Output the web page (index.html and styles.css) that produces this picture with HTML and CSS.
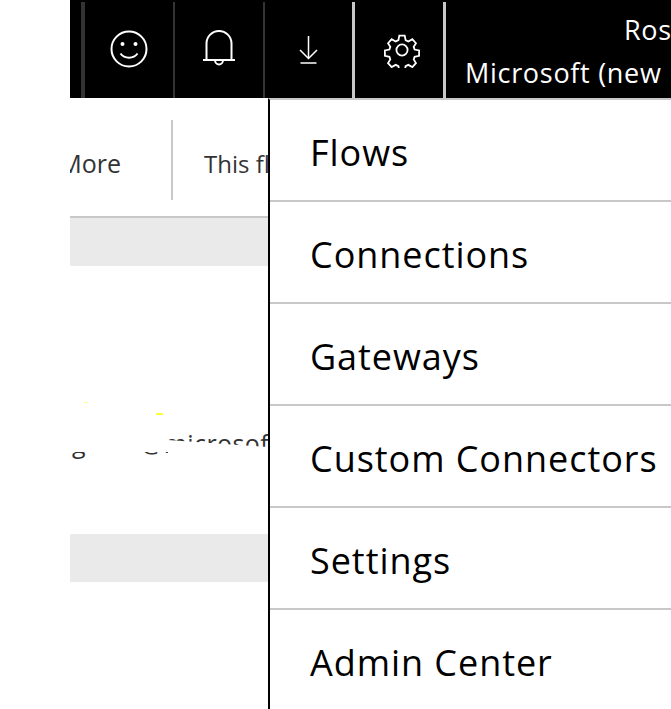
FILE: index.html
```html
<!DOCTYPE html>
<html lang="en">
<head>
  <meta charset="UTF-8" />
  <title>Flows</title>
  <link rel="stylesheet" href="styles.css">
</head>
<body>

  <div class="topbar">
    <div class="cell cell-first"></div>
    <div class="cell cell-dim">
      <svg class="icon icon-up" width="40" height="40" viewBox="0 0 40 40"><circle cx="20" cy="20" r="17.500"/><circle cx="13.500" cy="15" r="2" class="dot"/><circle cx="26.500" cy="15" r="2" class="dot"/><path d="M11.500 24.500c4 5.500 13 5.500 17 0"/></svg>
    </div>
    <div class="cell cell-dim">
      <svg class="icon icon-up" width="40" height="40" viewBox="0 0 40 40"><path d="M7.500 31V14.500a12.500 12.500 0 0 1 25 0V31"/><path d="M4 31h32"/><path d="M16 31a4 4.500 0 0 0 8 0"/></svg>
    </div>
    <div class="cell cell-light">
      <svg class="icon icon-thin" width="40" height="40" viewBox="0 0 40 40"><path d="M19.500 6v22"/><path d="M11 20l8.500 8.500 8.500-8.500"/><path d="M11.500 33h16"/></svg>
    </div>
    <div class="cell cell-light cell-gear">
      <svg class="icon" width="36" height="36" viewBox="0 0 40 40"><circle cx="20" cy="20" r="6.200"/><path d="M17 4h6l1 5 3 1.500 4.500-2.500 4 4.500-2.500 4 1 3 5 1v6l-5 1-1 3 2.500 4-4 4.500-4.500-2.500-3 1.500-1 5h-6l-1-5-3-1.500-4.500 2.500-4-4.500 2.500-4-1-3-5-1v-6l5-1 1-3-2.500-4 4-4.500 4.500 2.500 3-1.500z"/></svg>
    </div>
    <div class="account">
      <div class="account-name">Rosalind Smith</div>
      <div class="account-org">Microsoft (new</div>
    </div>
  </div>

  <div class="main">
    <div class="page">
      <div class="toolbar">
        <div class="tool-more"><span>More</span></div>
        <div class="tool-note">This flow has no runs</div>
      </div>
      <div class="band band-head"></div>
      <div class="owner">
        <span class="speck speck-a"></span>
        <span class="speck speck-b"></span>
        <div class="owner-mail">g<span class="gap"></span>@microsoft.com</div>
        <span class="wipe wipe-left"></span>
        <span class="wipe wipe-right"></span>
      </div>
      <div class="band"></div>
    </div>

    <div class="menu">
      <div class="menu-item">Flows</div>
      <div class="menu-item">Connections</div>
      <div class="menu-item">Gateways</div>
      <div class="menu-item">Custom Connectors</div>
      <div class="menu-item">Settings</div>
      <div class="menu-item">Admin Center</div>
    </div>
  </div>

</body>
</html>
```

FILE: styles.css
```css
html, body {
  height: 100%;
}
body {
  margin: 0;
  background: #fff;
  font-family: "Open Sans", Arial, sans-serif;
  overflow: hidden;
}
.topbar {
  display: flex;
  height: 98px;
  margin-left: 70px;
  background: #000;
}
.cell {
  width: 88px;
  margin-top: 2px;
  display: flex;
  align-items: center;
  justify-content: center;
  flex-shrink: 0;
}
.cell-first {
  width: 11px;
  border-right: 4px solid #333;
}
.cell-dim {
  border-right: 2px solid #333;
}
.cell-light {
  width: 87px;
  border-right: 3px solid #c8c8c8;
}
.cell-gear {
  width: 88px;
}
.cell-gear .icon {
  margin-left: 5px;
}
.icon {
  fill: none;
  stroke: #fff;
  stroke-width: 2;
}
.icon-up {
  margin-bottom: 3px;
}
.icon-thin {
  stroke-width: 1.500;
}
.icon .dot {
  fill: #fff;
  stroke: none;
}
.account {
  flex: 1;
  min-width: 0;
  overflow: hidden;
  white-space: nowrap;
  color: #fff;
  font-size: 27px;
  letter-spacing: .7px;
  line-height: 43px;
  padding: 8px 0 0 19px;
}
.account-name {
  padding-left: 159px;
}
.main {
  display: flex;
  height: 611px;
}
.page {
  width: 198px;
  margin-left: 70px;
  overflow: hidden;
  flex-shrink: 0;
}
.toolbar {
  display: flex;
  height: 118px;
  padding-top: 22px;
  box-sizing: border-box;
  white-space: nowrap;
  color: #333;
  font-size: 24px;
}
.tool-more {
  width: 101px;
  height: 80px;
  line-height: 86px;
  font-size: 25px;
  display: flex;
  justify-content: flex-end;
  box-sizing: border-box;
  padding-right: 50px;
  flex-shrink: 0;
}
.tool-note {
  height: 80px;
  line-height: 88px;
  padding-left: 31px;
  border-left: 2px solid #c8c8c8;
}
.band {
  height: 48px;
  background: #eaeaea;
}
.band-head {
  border-top: 2px solid #c8c8c8;
}
.owner {
  position: relative;
  height: 268px;
  box-sizing: border-box;
  padding-top: 160px;
  overflow: hidden;
}
.owner-mail {
  white-space: nowrap;
  color: #333;
  font-size: 25px;
  letter-spacing: .4px;
  line-height: 34px;
  padding-left: 2px;
}
.gap {
  display: inline-block;
  width: 55px;
}
.wipe {
  position: absolute;
  background: #fff;
}
.wipe-left {
  top: 150px;
  left: 0;
  width: 98px;
  height: 36px;
}
.wipe-right {
  top: 174px;
  left: 98px;
  width: 100px;
  height: 30px;
  clip-path: polygon(0 0, 100% 7px, 100% 100%, 0 100%);
}
.speck {
  position: absolute;
  height: 2px;
  background: #ffff33;
}
.speck-a {
  left: 14px;
  top: 136px;
  width: 4px;
  height: 1px;
  background: #ffff90;
}
.speck-b {
  left: 86px;
  top: 147px;
  width: 7px;
}
.menu {
  flex: 1;
  min-width: 0;
  border-left: 2px solid #000;
  border-top: 2px solid #c8c8c8;
  background: #fff;
}
.menu-item {
  height: 100px;
  line-height: 106px;
  padding-left: 40px;
  border-bottom: 2px solid #c8c8c8;
  color: #000;
  font-size: 36px;
  letter-spacing: .95px;
  white-space: nowrap;
}
.menu-item:last-child {
  border-bottom: 0;
}
```
